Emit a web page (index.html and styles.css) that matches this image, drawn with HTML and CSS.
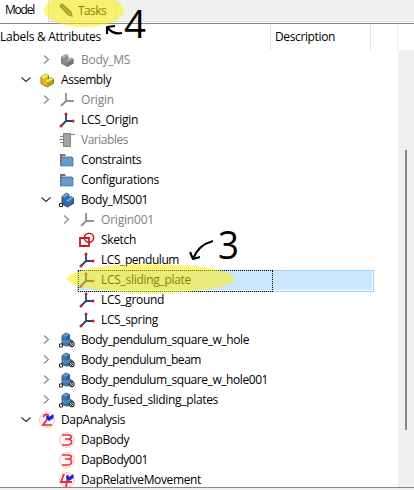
FILE: index.html
```html
<!DOCTYPE html>
<html lang="en">
<head>
<meta charset="utf-8">
<title>Model tree</title>
<link rel="stylesheet" href="styles.css">
</head>
<body>
<svg class="defs" aria-hidden="true">
  <symbol id="right" viewBox="0 0 16 16"><path d="M6 3.5l4.5 4-4.5 4" fill="none" stroke="#858585" stroke-width="1.1"/></symbol>
  <symbol id="down" viewBox="0 0 16 16"><path d="M3.5 5.5l4.5 4 4.5-4" fill="none" stroke="#333" stroke-width="1.2"/></symbol>
  <symbol id="part-gray" viewBox="0 0 16 16"><path d="M2 5l5-3 2.5 1.5V7L12 5.500l2.500 1.500v4.500L8 15l-6-3.500z" fill="#868686"/><path d="M2 5l5-3 2.500 1.500L4.500 6.500zM7 9l5-3.500L14.500 7 9 10z" fill="#acacac"/><path d="M8.500 10.500l6-3.500v4.500L8 15z" fill="#747474"/></symbol>
  <symbol id="part-yellow" viewBox="0 0 16 16"><path d="M2 5l5-3 2.500 1.500V7L12 5.500l2.500 1.500v4.500L8 15l-6-3.500z" fill="#dcbc20" stroke="#665811" stroke-width=".8"/><path d="M2 5l5-3 2.500 1.500L4.500 6.500zM7 9l5-3.500L14.500 7 9 10z" fill="#ffec57"/><path d="M8.500 10.500l6-3.500v4.500L8 15z" fill="#bd9c10"/></symbol>
  <symbol id="part-blue" viewBox="0 0 16 16"><path d="M3 4.500L7.500 1 10 2.500V6l2-1.500L14.500 6v5.500L8.500 15 3 12z" fill="#3569a5" stroke="#173456" stroke-width=".8"/><path d="M3 4.500L7.500 1 10 2.500 5.500 6zM7 8.500l5-4L14.500 6 9 10z" fill="#6c9dd0"/><path d="M.5 11.500h3v3h-3z" fill="#fff" stroke="#222"/></symbol>
  <symbol id="part-link" viewBox="0 0 16 16"><path d="M3 3.500L7 1l3.500 1.500V7l3.500 2-2 4.500-5 .5-5-2 1-1z" fill="#3f76b4" stroke="#24466d" stroke-width=".8"/><path d="M3 3.500L7 1l3.500 1.500L7 5z" fill="#6495c8"/><path d="M7 5l3.500-2.500V7L7 9z" fill="#2d609b"/><path d="M3 9l4 1 4-2" fill="none" stroke="#6d9dcf"/><path d="M.5 12h3v3h-3z" fill="#fff" stroke="#222"/><circle cx="12.700" cy="12.300" r="3" fill="#222"/><path d="M10.500 10.500l2 1.800-2 1.800M12.700 10.300l2 2-2 2" fill="none" stroke="#fff"/></symbol>
  <symbol id="axis-gray" viewBox="0 0 16 16"><path d="M7 1v8h8M7 9l-5 5" fill="none" stroke="#929292" stroke-width="1.8"/></symbol>
  <symbol id="axis" viewBox="0 0 16 16"><path d="M7 2v7h7M7 9l-5 5" fill="none" stroke="#294668" stroke-width="1.8"/><g fill="#c91d2a"><circle cx="7" cy="2" r="1.5"/><circle cx="14" cy="9" r="1.5"/><circle cx="2" cy="14" r="1.5"/></g></symbol>
  <symbol id="vars" viewBox="0 0 16 16"><path d="M4.500 1.500h7v13h-7z" fill="#a2a2a2" stroke="#858585"/><path d="M1 4.500h4M0 7.500h5M1 10.500h4M12 2.500h4" stroke="#858585" stroke-width="1.200"/></symbol>
  <symbol id="folder" viewBox="0 0 16 16"><path d="M1 2h5l1 2h6v10H1z" fill="#77736d"/><path d="M3 4h10v3H3z" fill="#bbb"/><path d="M2.500 5.500H14V14H1.500z" fill="#6898d0" stroke="#416fa7" stroke-width=".7"/></symbol>
  <symbol id="sketch" viewBox="0 0 16 16"><path d="M1 6h9v8H1z" fill="none" stroke="#cc1824" stroke-width="1.800"/><circle cx="10" cy="5.800" r="4.600" fill="none" stroke="#cc1824" stroke-width="1.600"/></symbol>
  <symbol id="dap2" viewBox="0 0 16 16"><circle cx="8" cy="8" r="7.500" fill="#fff0f0" stroke="#f6b5b5" stroke-width=".8"/><path d="M4 5c2-4 7-3 5 1L4 13h9" fill="none" stroke="#e72c38" stroke-width="1.700"/><path d="M7.500 3l2.500 2 4.500-3v4L10 9 7 6z" fill="#1420e7"/></symbol>
  <symbol id="dap3" viewBox="0 0 16 16"><circle cx="8" cy="8" r="7.500" fill="#fff3f3" stroke="#f3bcbc" stroke-width=".8"/><path d="M3 3h6c5 0 4 4 0 4H6h3c5 0 5 6-1 6H3" fill="none" stroke="#e53440" stroke-width="1.600"/></symbol>
  <symbol id="dap4" viewBox="0 0 16 16"><circle cx="8" cy="8" r="7.500" fill="#fff0f0" stroke="#f6b5b5" stroke-width=".8"/><path d="M5 2L2 10h11M9 3L7 15" fill="none" stroke="#e72c38" stroke-width="1.800"/><path d="M7.500 3l2.500 2 4.500-3v4L10 9 7 6z" fill="#1420e7"/></symbol>
</svg>
<div class="panel">
  <nav class="tabs">
    <div class="tab active"><span data-width="29">Model</span></div>
    <div class="tab tasks">
      <svg class="pencil" viewBox="0 0 16 16"><path d="M1 4l3-3 9.500 8.500 1.500 5.500-5-1.500z" fill="#4e4e4e"/><path d="M3.500 3.500l8.500 8.500" stroke="#8c8c8c"/><path d="M10 13.500l3.500-4" stroke="#aaa"/></svg>
      <span data-width="28">Tasks</span>
    </div>
  </nav>
  <header class="header"><div class="labels"><span data-width="101">Labels &amp; Attributes</span></div><div class="description"><span data-width="60">Description</span></div></header>
  <div class="body">
    <main class="tree">
      <div class="row l2 muted"><svg><use href="#right"/></svg><svg><use href="#part-gray"/></svg><span data-width="49">Body_MS</span></div>
      <div class="row l1"><svg><use href="#down"/></svg><svg><use href="#part-yellow"/></svg><span data-width="50">Assembly</span></div>
      <div class="row l2 muted"><svg><use href="#right"/></svg><svg><use href="#axis-gray"/></svg><span data-width="33">Origin</span></div>
      <div class="row l2"><svg></svg><svg><use href="#axis"/></svg><span data-width="57">LCS_Origin</span></div>
      <div class="row l2 muted"><svg></svg><svg><use href="#vars"/></svg><span data-width="47">Variables</span></div>
      <div class="row l2"><svg></svg><svg><use href="#folder"/></svg><span data-width="60">Constraints</span></div>
      <div class="row l2"><svg></svg><svg><use href="#folder"/></svg><span data-width="78">Configurations</span></div>
      <div class="row l2"><svg><use href="#down"/></svg><svg><use href="#part-blue"/></svg><span data-width="67">Body_MS001</span></div>
      <div class="row l3 muted"><svg><use href="#right"/></svg><svg><use href="#axis-gray"/></svg><span data-width="53">Origin001</span></div>
      <div class="row l3"><svg></svg><svg><use href="#sketch"/></svg><span data-width="35">Sketch</span></div>
      <div class="row l3"><svg></svg><svg><use href="#axis"/></svg><span data-width="78">LCS_pendulum</span></div>
      <div class="row l3 selected"><svg></svg><svg><use href="#axis"/></svg><span data-width="90">LCS_sliding_plate</span></div>
      <div class="row l3"><svg></svg><svg><use href="#axis"/></svg><span data-width="63">LCS_ground</span></div>
      <div class="row l3"><svg></svg><svg><use href="#axis"/></svg><span data-width="57">LCS_spring</span></div>
      <div class="row l2"><svg><use href="#right"/></svg><svg><use href="#part-link"/></svg><span data-width="168">Body_pendulum_square_w_hole</span></div>
      <div class="row l2"><svg><use href="#right"/></svg><svg><use href="#part-link"/></svg><span data-width="120">Body_pendulum_beam</span></div>
      <div class="row l2"><svg><use href="#right"/></svg><svg><use href="#part-link"/></svg><span data-width="187">Body_pendulum_square_w_hole001</span></div>
      <div class="row l2"><svg><use href="#right"/></svg><svg><use href="#part-link"/></svg><span data-width="137">Body_fused_sliding_plates</span></div>
      <div class="row l1"><svg><use href="#down"/></svg><svg><use href="#dap2"/></svg><span data-width="64">DapAnalysis</span></div>
      <div class="row l2"><svg></svg><svg><use href="#dap3"/></svg><span data-width="48">DapBody</span></div>
      <div class="row l2"><svg></svg><svg><use href="#dap3"/></svg><span data-width="67">DapBody001</span></div>
      <div class="row l2"><svg></svg><svg><use href="#dap4"/></svg><span data-width="120">DapRelativeMovement</span></div>
    </main>
    <aside class="scrollbar"><div class="thumb"></div></aside>
  </div>
  <footer class="footer"></footer>
</div>
<svg class="notes" viewBox="0 0 414 490">
  <g fill="#fff000" fill-opacity=".52"><ellipse cx="84" cy="10.5" rx="40" ry="16.5"/><ellipse cx="151" cy="278.7" rx="84" ry="14.5"/></g>
  <g fill="none" stroke="#000" stroke-width="2.1" stroke-linejoin="round"><path d="M122 33q-9 2-15-6M107 34v-7l8-1"/><path d="M213 241q-15 4-20 18M190 252l3 7 7-2"/></g>
  <text x="124" y="38" font-size="38" textLength="22" lengthAdjust="spacingAndGlyphs">4</text>
  <text x="218" y="258.500" font-size="38" textLength="21" lengthAdjust="spacingAndGlyphs">3</text>
</svg>
<script src="script.js"></script>
</body>
</html>
```
FILE: styles.css
```css
* { box-sizing: border-box; }
body { margin: 0; font: 12px/20px "Open Sans", "Noto Sans", sans-serif; color: #000; }
.defs { position: absolute; width: 0; height: 0; }
.panel { width: 414px; height: 490px; display: flex; flex-direction: column; overflow: hidden; background: #fff; }
.tabs { display: flex; flex: 0 0 24px; background: #f0f0f0; border-bottom: 1px solid #828790; box-shadow: inset 0 -1px #fff, inset 0 -2px #e3e3e3; }
.tab { height: 23px; white-space: nowrap; }
.active { width: 49px; padding-left: 5px; background: #fff; border-right: 1px solid #ddd; }
.tasks { width: 67px; height: 21px; display: flex; padding-left: 9px; gap: 4px; border-right: 1px solid #ddd; }
.tasks span { padding-top: 1px; }
.pencil { width: 16px; height: 16px; margin-top: 2px; }
.header { display: flex; flex: 0 0 24px; width: 398px; line-height: 26px; border-right: 1px solid #f0f0f0; white-space: nowrap; }
.labels { width: 271px; border-right: 1px solid #e2e2e2; }
.description { width: 100px; padding-left: 4px; border-right: 1px solid #e2e2e2; }
.body { display: flex; flex: 0 0 437px; overflow: hidden; }
.tree { width: 398px; }
.row { display: flex; align-items: center; height: 20px; width: 372px; padding-bottom: 1px; white-space: nowrap; }
.row span { line-height: 18px; }
.row svg { flex: 0 0 16px; width: 16px; height: 16px; }
.row svg + svg { margin: 0 6px 0 5px; }
.l1 { padding-left: 18px; }
.l2 { padding-left: 38px; }
.l3 { padding-left: 58px; }
.muted { color: #808080; }
.selected { position: relative; background: linear-gradient(#cce8ff, #cce8ff) 77px 0 / 295px 20px no-repeat; }
.selected::before { content: ""; position: absolute; left: 77px; top: 0; width: 295px; height: 20px; border: 1px solid #99d1ff; }
.selected::after { content: ""; position: absolute; left: 78px; top: 0; width: 193px; height: 20px; border: 1px dotted #000; }
.header, .tabs, .scrollbar { min-width: 0; }
.scrollbar { width: 16px; padding: 100px 0 0 7px; background: #f0f0f0; }
.thumb { width: 2px; height: 280px; background: #858585; }
.footer { flex: 1; background: #f0f0f0; border-top: 1px solid #828790; }
.notes { position: absolute; inset: 0; width: 414px; height: 490px; pointer-events: none; font-family: "Open Sans", "Noto Sans", sans-serif; }
```
FILE: script.js
```js
document.querySelectorAll("[data-width]").forEach((label) => {
  const natural = label.getBoundingClientRect().width;
  const spacing = (Number(label.dataset.width) - natural) / label.textContent.length;
  label.style.letterSpacing = `${spacing}px`;
});
```
